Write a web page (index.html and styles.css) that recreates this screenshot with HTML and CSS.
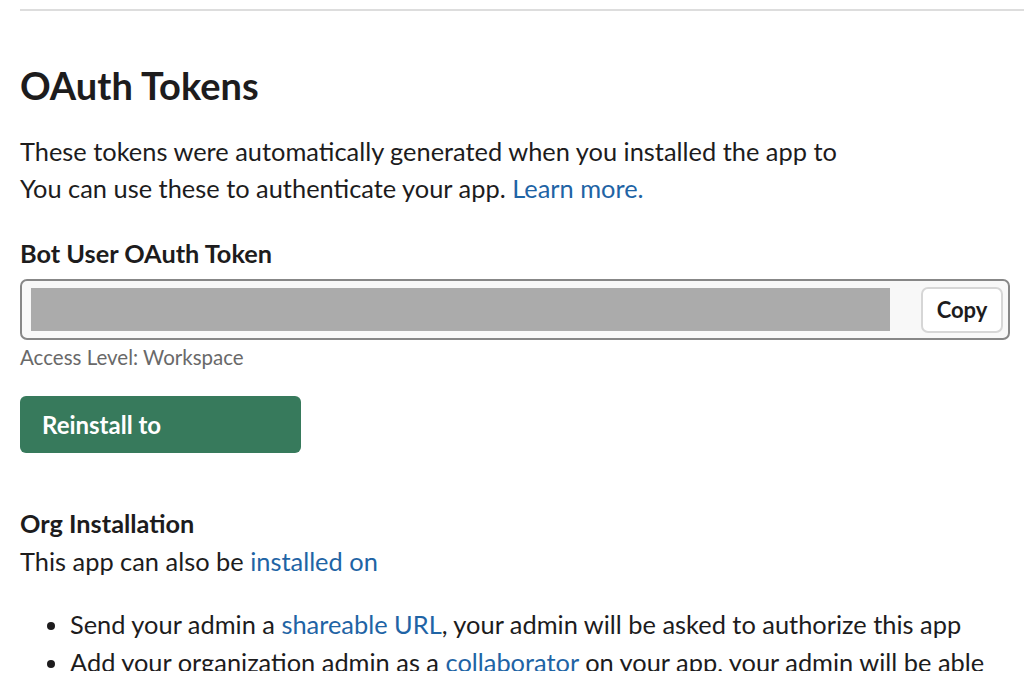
FILE: index.html
```html
<!DOCTYPE html>
<html lang="en">
<head>
<meta charset="utf-8">
<title>OAuth Tokens</title>
<link rel="stylesheet" href="styles.css">
</head>
<body>
<div class="page">
  <hr class="divider">
  <h1 class="title">OAuth Tokens</h1>
  <p class="intro">These tokens were automatically generated when you installed the app to<br>You can use these to authenticate your app. <a href="#" class="link">Learn more.</a></p>
  <h2 class="label">Bot User OAuth Token</h2>
  <div class="token-box">
    <div class="token-mask"></div>
    <button class="copy-btn">Copy</button>
  </div>
  <div class="access">Access Level: Workspace</div>
  <button class="reinstall">Reinstall to</button>
  <h2 class="label org">Org Installation</h2>
  <p class="org-text">This app can also be <a href="#" class="link">installed on</a></p>
  <ul class="options">
    <li>Send your admin a <a href="#" class="link">shareable URL</a>, your admin will be asked to authorize this app</li>
    <li>Add your organization admin as a <a href="#" class="link">collaborator</a> on your app, your admin will be able</li>
  </ul>
</div>
</body>
</html>
```

FILE: styles.css
```css
html, body {
  margin: 0;
  padding: 0;
  background: #ffffff;
}
body {
  font-family: Lato, "Noto Sans", sans-serif;
  color: #1d1c1d;
  overflow: hidden;
  height: 683px;
}
.page {
  padding: 9px 0 0 20px;
  height: 671px;
  box-sizing: border-box;
  overflow: hidden;
}
.divider {
  border: 0;
  border-top: 2px solid #dddddd;
  margin: 0;
}
.title {
  font-size: 38px;
  line-height: 44px;
  font-weight: 700;
  margin: 52px 0 0 0;
}
.intro {
  font-size: 25.4px;
  line-height: 37px;
  margin: 26px 0 0 0;
}
.link {
  color: #1f64a5;
  text-decoration: none;
}
.label {
  font-size: 25.3px;
  line-height: 32px;
  font-weight: 700;
  margin: 30px 0 0 0;
}
.token-box {
  margin: 10px 14px 0 0;
  height: 61px;
  box-sizing: border-box;
  border: 2px solid #878787;
  border-radius: 7px;
  background: #f8f8f8;
  display: flex;
  align-items: center;
  padding: 0 6px 0 9px;
  gap: 31px;
}
.token-mask {
  flex: 0 0 859px;
  height: 43px;
  background: #ababab;
}
.copy-btn {
  flex: 0 0 82px;
  height: 46px;
  border: 2px solid #d6d6d6;
  border-radius: 7px;
  background: #ffffff;
  font-family: Lato, "Noto Sans", sans-serif;
  font-size: 22px;
  font-weight: 700;
  color: #1d1c1d;
  padding: 0;
}
.access {
  font-size: 20.5px;
  line-height: 24px;
  color: #696969;
  margin-top: 5px;
}
.reinstall {
  display: block;
  margin-top: 27px;
  width: 281px;
  height: 57px;
  border: 0;
  border-radius: 6px;
  background: #377a5c;
  color: #ffffff;
  font-family: Lato, "Noto Sans", sans-serif;
  font-size: 24px;
  font-weight: 700;
  text-align: left;
  padding: 0 0 0 22px;
}
.label.org {
  margin-top: 54px;
}
.org-text {
  font-size: 25.4px;
  line-height: 37px;
  margin: 4px 0 0 0;
}
.options {
  margin: 25px 0 0 0;
  padding-left: 50px;
  font-size: 25.4px;
  line-height: 38px;
}
```
